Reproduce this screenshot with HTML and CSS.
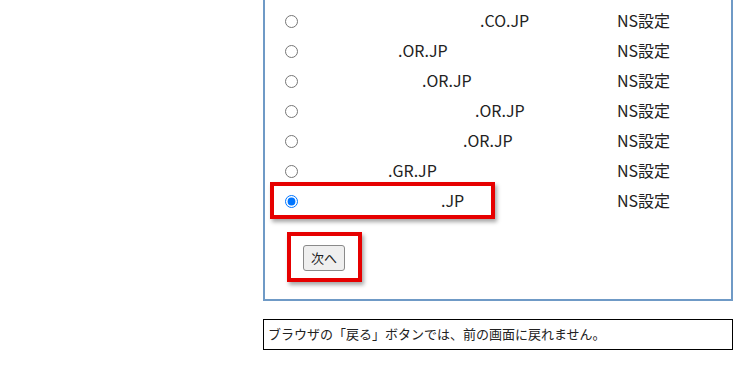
FILE: index.html
```html
<!DOCTYPE html>
<html lang="ja">
  <head>
    <meta charset="UTF-8" />
    <meta name="viewport" content="width=device-width, initial-scale=1.0" />
    <title>ドメイン選択</title>
    <link rel="stylesheet" href="styles.css">
  </head>
  <body>
    <div class="page">
      <!-- ドメイン一覧 -->
      <form class="panel">
        <div class="domain-row">
          <span class="cell-radio"><input type="radio" name="domain" /></span>
          <span class="cell-name"><span class="mask mask-1"></span>.CO.JP</span>
          <span class="cell-ns">NS設定</span>
        </div>
        <div class="domain-row">
          <span class="cell-radio"><input type="radio" name="domain" /></span>
          <span class="cell-name"><span class="mask mask-2"></span>.OR.JP</span>
          <span class="cell-ns">NS設定</span>
        </div>
        <div class="domain-row">
          <span class="cell-radio"><input type="radio" name="domain" /></span>
          <span class="cell-name"><span class="mask mask-3"></span>.OR.JP</span>
          <span class="cell-ns">NS設定</span>
        </div>
        <div class="domain-row">
          <span class="cell-radio"><input type="radio" name="domain" /></span>
          <span class="cell-name"><span class="mask mask-4"></span>.OR.JP</span>
          <span class="cell-ns">NS設定</span>
        </div>
        <div class="domain-row">
          <span class="cell-radio"><input type="radio" name="domain" /></span>
          <span class="cell-name"><span class="mask mask-5"></span>.OR.JP</span>
          <span class="cell-ns">NS設定</span>
        </div>
        <div class="domain-row">
          <span class="cell-radio"><input type="radio" name="domain" /></span>
          <span class="cell-name"><span class="mask mask-6"></span>.GR.JP</span>
          <span class="cell-ns">NS設定</span>
        </div>
        <div class="domain-row">
          <span class="cell-radio"><input type="radio" name="domain" checked /></span>
          <span class="cell-name"><span class="mask mask-7"></span>.JP</span>
          <span class="cell-ns">NS設定</span>
        </div>

        <div class="actions">
          <button type="button" class="btn">次へ</button>
        </div>

        <!-- 注目枠 -->
        <div class="mark mark-row"></div>
        <div class="mark mark-btn"></div>
      </form>

      <p class="notice">ブラウザの「戻る」ボタンでは、前の画面に戻れません。</p>
    </div>
  </body>
</html>
```

FILE: styles.css
```css
body {
  margin: 0;
  background: #fff;
  color: #222;
  font-family: 'Noto Sans CJK JP', 'Noto Sans', sans-serif;
}

.page {
  width: 470px;
  margin-left: 263px;
}

/* ドメイン一覧の枠 */
.panel {
  position: relative;
  border: 2px solid #6f9ac6;
  border-top: none;
  padding: 6px 0 28px;
  margin: 0;
}

.domain-row {
  display: grid;
  grid-template-columns: 45px 307px 1fr;
  align-items: center;
  height: 30px;
  font-size: 16px;
}

.cell-radio {
  display: flex;
  align-items: center;
  padding-left: 20px;
}

.cell-radio input {
  width: 13px;
  height: 13px;
  margin: 0;
}

.cell-name,
.cell-ns {
  display: flex;
  align-items: center;
  white-space: nowrap;
  padding-bottom: 3px;
}

/* 伏せ字部分 */
.mask {
  display: inline-block;
  height: 14px;
}

.mask-1 { width: 170px; }
.mask-2 { width: 88px; }
.mask-3 { width: 112px; }
.mask-4 { width: 165px; }
.mask-5 { width: 153px; }
.mask-6 { width: 78px; }
.mask-7 { width: 131px; }

.actions {
  padding: 28px 0 0 38px;
}

.btn {
  height: 26px;
  width: 42px;
  padding: 0;
  font-family: inherit;
  font-size: 13px;
  color: #222;
  background: #efefef;
  border: 1px solid #8a8a8a;
  border-radius: 3px;
}

/* 赤い強調枠 */
.mark {
  position: absolute;
  border: 4px solid #e60000;
  box-shadow: 2px 3px 4px rgba(0, 0, 0, 0.35);
}

.mark-row {
  left: 5px;
  top: 182px;
  width: 217px;
  height: 29px;
}

.mark-btn {
  left: 22px;
  top: 232px;
  width: 67px;
  height: 42px;
}

.notice {
  margin: 18px 0 0;
  border: 1px solid #000;
  height: 29px;
  line-height: 27px;
  padding-left: 4px;
  font-size: 13px;
}
```
